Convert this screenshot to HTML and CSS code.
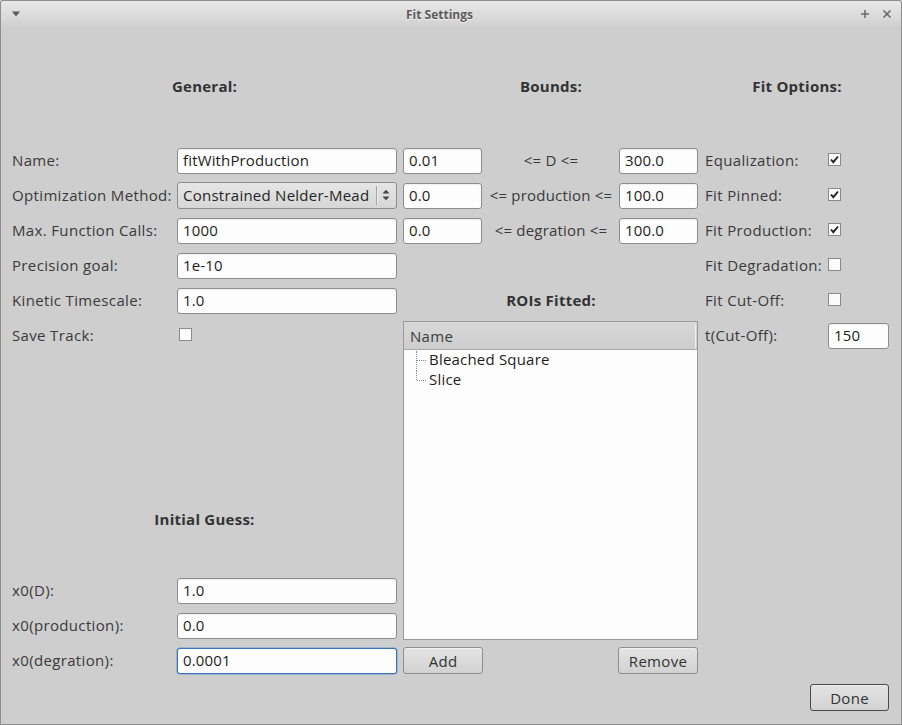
FILE: index.html
```html
<!DOCTYPE html>
<html>
<head>
<meta charset="utf-8">
<title>Fit Settings</title>
<link rel="stylesheet" href="styles.css">
</head>
<body>
<div class="window">
  <div class="titlebar">
    <span class="tb-menu">
      <svg width="10" height="6" viewBox="0 0 10 6"><path d="M1 0.5 L9 0.5 L5 5.5 Z" fill="#5a5a5a"/></svg>
    </span>
    <span class="tb-title">Fit Settings</span>
    <span class="tb-buttons">
      <svg width="10" height="10" viewBox="0 0 10 10"><path d="M5 1 V9 M1 5 H9" stroke="#6a6a6a" stroke-width="1.6"/></svg>
      <svg width="10" height="10" viewBox="0 0 10 10"><path d="M1.5 1.5 L8.5 8.5 M8.5 1.5 L1.5 8.5" stroke="#6a6a6a" stroke-width="1.6"/></svg>
    </span>
  </div>

  <div class="content">
    <div class="hdr c-general r1">General:</div>
    <div class="hdr c-bounds r1">Bounds:</div>
    <div class="hdr c-options r1">Fit Options:</div>

    <!-- row: Name -->
    <div class="lbl c1 r2">Name:</div>
    <input class="field c2 r2" type="text" value="fitWithProduction">
    <input class="field c3 r2" type="text" value="0.01">
    <div class="mid c4 r2">&lt;= D &lt;=</div>
    <input class="field c5 r2" type="text" value="300.0">
    <div class="lbl c6 r2">Equalization:</div>
    <span class="check on c7 r2"><svg width="11" height="11" viewBox="0 0 11 11"><path d="M2 5.5 L4.3 8.2 L9 2.5" fill="none" stroke="#222" stroke-width="1.9"/></svg></span>

    <!-- row: Optimization -->
    <div class="lbl c1 r3">Optimization Method:</div>
    <div class="combo c2 r3">
      <span class="combo-text">Constrained Nelder-Mead</span>
      <span class="combo-sep"></span>
      <svg class="combo-arrows" width="8" height="12" viewBox="0 0 8 12"><path d="M0.5 4.5 L4 0.8 L7.5 4.5 Z M0.5 7.5 L4 11.2 L7.5 7.5 Z" fill="#444"/></svg>
    </div>
    <input class="field c3 r3" type="text" value="0.0">
    <div class="mid c4 r3">&lt;= production &lt;=</div>
    <input class="field c5 r3" type="text" value="100.0">
    <div class="lbl c6 r3">Fit Pinned:</div>
    <span class="check on c7 r3"><svg width="11" height="11" viewBox="0 0 11 11"><path d="M2 5.5 L4.3 8.2 L9 2.5" fill="none" stroke="#222" stroke-width="1.9"/></svg></span>

    <!-- row: Max calls -->
    <div class="lbl c1 r4">Max. Function Calls:</div>
    <input class="field c2 r4" type="text" value="1000">
    <input class="field c3 r4" type="text" value="0.0">
    <div class="mid c4 r4">&lt;= degration &lt;=</div>
    <input class="field c5 r4" type="text" value="100.0">
    <div class="lbl c6 r4">Fit Production:</div>
    <span class="check on c7 r4"><svg width="11" height="11" viewBox="0 0 11 11"><path d="M2 5.5 L4.3 8.2 L9 2.5" fill="none" stroke="#222" stroke-width="1.9"/></svg></span>

    <!-- row: Precision -->
    <div class="lbl c1 r5">Precision goal:</div>
    <input class="field c2 r5" type="text" value="1e-10">
    <div class="lbl c6 r5">Fit Degradation:</div>
    <span class="check c7 r5"></span>

    <!-- row: Kinetic -->
    <div class="lbl c1 r6">Kinetic Timescale:</div>
    <input class="field c2 r6" type="text" value="1.0">
    <div class="hdr c-bounds r6">ROIs Fitted:</div>
    <div class="lbl c6 r6">Fit Cut-Off:</div>
    <span class="check c7 r6"></span>

    <!-- row: Save track -->
    <div class="lbl c1 r7">Save Track:</div>
    <span class="check c2 r7 save"></span>
    <div class="lbl c6 r7">t(Cut-Off):</div>
    <input class="field c7 r7" type="text" value="150">

    <!-- tree -->
    <div class="tree">
      <div class="tree-head"><span>Name</span></div>
      <ul class="tree-body">
        <li class="tree-item first">Bleached Square</li>
        <li class="tree-item last">Slice</li>
      </ul>
    </div>

    <div class="hdr c-general r9">Initial Guess:</div>

    <div class="lbl c1 r11">x0(D):</div>
    <input class="field c2 r11" type="text" value="1.0">
    <div class="lbl c1 r12">x0(production):</div>
    <input class="field c2 r12" type="text" value="0.0">
    <div class="lbl c1 r13">x0(degration):</div>
    <input class="field focus c2 r13" type="text" value="0.0001">

    <button class="btn c3 r13">Add</button>
    <button class="btn c5 r13">Remove</button>
    <button class="btn default done r14">Done</button>
  </div>
</div>
</body>
</html>
```

FILE: styles.css
```css
* { box-sizing: border-box; }
html, body { margin: 0; padding: 0; }
body {
  width: 902px;
  height: 725px;
  background: #cecece;
  font-family: "Open Sans", "Noto Sans", sans-serif;
  font-size: 15px;
  color: #3a3a3a;
  overflow: hidden;
}
.window {
  width: 902px;
  height: 725px;
  border: 1px solid #8e8e8e;
  border-radius: 3px 3px 0 0;
  background: #cecece;
  display: flex;
  flex-direction: column;
}
.titlebar {
  height: 28px;
  flex: none;
  display: flex;
  align-items: center;
  background: linear-gradient(#e8e8e8, #d9d9d9 60%, #cdcdcd);
  border-radius: 3px 3px 0 0;
  padding: 0 9px 0 10px;
}
.tb-menu { width: 24px; display: flex; align-items: center; margin-top: -2px; }
.tb-title {
  flex: 1;
  text-align: center;
  font-size: 12px;
  font-weight: bold;
  color: #5c5c5c;
  text-shadow: 0 1px 0 #f4f4f4;
  padding-right: 16px;
  margin-top: -2px;
}
.tb-buttons { display: flex; gap: 12px; align-items: center; margin-top: -3px; }

.content {
  flex: 1;
  display: grid;
  padding: 0 11px 7px 11px;
  grid-template-columns: 165px 220px 6px 80px 136px 80px 6px 123px 61px;
  grid-template-rows: 114px repeat(6, 35px) 153px 26px 41px repeat(3, 35px) 39px;
}

.r1 { grid-row: 1; } .r2 { grid-row: 2; } .r3 { grid-row: 3; } .r4 { grid-row: 4; }
.r5 { grid-row: 5; } .r6 { grid-row: 6; } .r7 { grid-row: 7; } .r9 { grid-row: 9; }
.r11 { grid-row: 11; } .r12 { grid-row: 12; } .r13 { grid-row: 13; } .r14 { grid-row: 14; }
.c1 { grid-column: 1; } .c2 { grid-column: 2; } .c3 { grid-column: 4; }
.c4 { grid-column: 5; } .c5 { grid-column: 6; } .c6 { grid-column: 8; } .c7 { grid-column: 9; }
.c-general { grid-column: 1 / 3; }
.c-bounds { grid-column: 4 / 7; }
.c-options { grid-column: 8 / 10; }

.hdr {
  align-self: center;
  text-align: center;
  font-weight: bold;
  color: #333;
  letter-spacing: 0.25px;
  margin-top: -1px;
}
.lbl, .mid {
  align-self: center;
  white-space: nowrap;
  letter-spacing: 0.35px;
  margin-top: -2px;
}
.mid { text-align: center; letter-spacing: 0.2px; }

.field {
  align-self: center;
  height: 26px;
  width: 100%;
  margin: 0;
  padding: 0 5px 2px 5px;
  border: 1px solid #8d8d8d;
  border-radius: 3px;
  background: #fdfdfd;
  font: inherit;
  font-size: 15px;
  letter-spacing: 0.15px;
  color: #1e1e1e;
  outline: none;
  box-shadow: inset 0 1px 1px rgba(0,0,0,0.06);
}
.c3.field, .c5.field { width: 79px; }
.field.focus { border-color: #3c72b6; box-shadow: 0 0 0 0.5px #6c98cf; }

.combo {
  align-self: center;
  height: 27px;
  border: 1px solid #8d8d8d;
  border-radius: 3px;
  background: linear-gradient(#e6e6e6, #d6d6d6);
  display: flex;
  align-items: center;
  padding-left: 5px;
  padding-bottom: 1px;
  color: #262626;
  letter-spacing: 0.25px;
}
.combo-text { flex: 1; white-space: nowrap; }
.combo-sep {
  width: 1px;
  height: 19px;
  background: #a3a3a3;
  box-shadow: 1px 0 0 #efefef;
  margin-right: 5px;
}
.combo-arrows { margin-right: 6px; }

.check {
  align-self: center;
  justify-self: start;
  width: 13px;
  height: 13px;
  border: 1px solid #8a8a8a;
  background: #fbfbfb;
  display: flex;
  align-items: center;
  justify-content: center;
  margin-left: 0;
  margin-top: -2px;
}
.check.save { margin-left: 2px; }

.tree {
  grid-column: 4 / 7;
  grid-row: 7 / 13;
  margin: 3px 1px 3px 0;
  border: 1px solid #9a9a9a;
  background: #fdfdfd;
  display: flex;
  flex-direction: column;
}
.tree-head {
  height: 28px;
  flex: none;
  background: linear-gradient(#d8d8d8, #cdcdcd);
  border-bottom: 1px solid #a8a8a8;
  display: flex;
  align-items: center;
  padding-left: 6px;
  color: #3a3a3a;
  letter-spacing: 0.3px;
  position: relative;
}
.tree-head::after {
  content: "";
  position: absolute;
  right: 1px;
  top: 3px;
  bottom: 0;
  width: 1px;
  background: #f0f0f0;
}
.tree-body {
  list-style: none;
  margin: 0;
  padding: 0 0 0 25px;
  color: #1e1e1e;
  letter-spacing: 0.2px;
}
.tree-item {
  height: 19.5px;
  line-height: 18px;
  position: relative;
}
.tree-item::before {
  content: "";
  position: absolute;
  left: -12px;
  top: 10px;
  width: 9px;
  border-top: 1px dotted #8a8a8a;
}
.tree-item::after {
  content: "";
  position: absolute;
  left: -13px;
  border-left: 1px dotted #8a8a8a;
}
.tree-item.first::after { top: 1px; height: 20px; }
.tree-item.last::after { top: 0; height: 10px; }

.btn {
  align-self: center;
  height: 27px;
  width: 80px;
  margin: 0;
  padding: 0;
  border: 1px solid #8f8f8f;
  border-radius: 3px;
  background: linear-gradient(#e4e4e4, #d2d2d2);
  font: inherit;
  font-size: 15px;
  letter-spacing: 0.3px;
  color: #333;
  box-shadow: inset 0 1px 0 rgba(255,255,255,0.4);
}
.btn.c5 { margin-left: -1px; }
.btn.default { border-color: #4a4a4a; }
.done {
  grid-column: 8 / 10;
  justify-self: end;
  width: 79px;
}
```
